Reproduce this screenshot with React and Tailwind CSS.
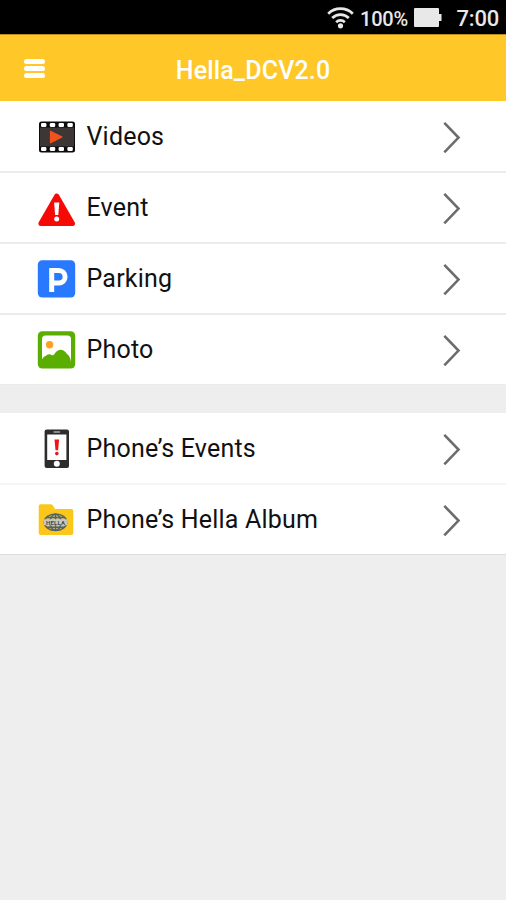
function FilmIcon() {
  return (
    <svg viewBox="0 0 40 40" className="size-10">
      <rect x="2" y="4.5" width="36" height="31" rx="2.5" fill="#0d0b0b" />
      <rect x="3" y="10.5" width="34" height="19" fill="#3c3636" />
      {[4, 12.8, 21.6, 30.4].map((x) => (
        <g key={x} fill="#fff">
          <rect x={x} y="6" width="5.4" height="4" rx="1.2" />
          <rect x={x} y="30" width="5.4" height="4" rx="1.2" />
        </g>
      ))}
      <path d="M13.5 14.2v11.6L25 20z" fill="#f4511e" stroke="#f4511e" strokeWidth="1.2" strokeLinejoin="round" />
    </svg>
  )
}

function WarningIcon() {
  return (
    <svg viewBox="0 0 40 40" className="size-10">
      <path d="M19.7 8L35.5 35.5H3.9z" fill="#f50a05" stroke="#f50a05" strokeWidth="5" strokeLinejoin="round" />
      <path d="M17.1 14.5h5.2l-1 12.5h-3.2z" fill="#fff" />
      <circle cx="19.7" cy="31" r="2.5" fill="#fff" />
    </svg>
  )
}

function ParkingIcon() {
  return (
    <svg viewBox="0 0 40 40" className="size-10">
      <rect x="0.8" y="1.2" width="37.4" height="37.4" rx="4.5" fill="#2979ff" />
      <path d="M14.7 33V11.5h7.1a6.1 6.1 0 0 1 0 12.6h-7" fill="none" stroke="#fff" strokeWidth="5" />
    </svg>
  )
}

function PhotoIcon() {
  return (
    <svg viewBox="0 0 40 40" className="size-10">
      <rect x="0.8" y="1.2" width="37.4" height="37.4" rx="4.5" fill="#5aae00" />
      <path
        d="M5 9a3.5 3.5 0 0 1 3.5-3.5h22A3.5 3.5 0 0 1 34 9v23c-.5-4-1.800-6.500-4-8-4-5.500-8.500-5.500-12.200-.5-.9 1.600-2 2.200-3.300 1.500-1.800-1.300-3.700-1-5.200.5C7.300 26.300 6 27.300 5 29.500z"
        fill="#fff"
      />
      <circle cx="12.6" cy="14.8" r="3.7" fill="#ffa01e" />
    </svg>
  )
}

function PhoneIcon() {
  return (
    <svg viewBox="0 0 40 40" className="size-10">
      <rect x="7.6" y="0.5" width="24.4" height="38.5" rx="2" fill="#2f2c2c" />
      <rect x="10.2" y="5.5" width="19.2" height="25.5" fill="#fff" />
      <rect x="16.3" y="2" width="7" height="2" rx="1" fill="#8a8888" />
      <circle cx="19.8" cy="34.8" r="3" fill="#fff" />
      <path d="M17.500 10.500h4.600l-1 10.700h-2.600z" fill="#f01313" />
      <circle cx="19.8" cy="24.6" r="1.8" fill="#f01313" />
    </svg>
  )
}

function FolderIcon() {
  return (
    <svg viewBox="0 0 40 40" className="size-10">
      <path
        d="M4 4.300h9.800q1.200 0 1.900 1l2.300 3.700h16.300a2 2 0 0 1 2 2v22a2 2 0 0 1-2 2H4a2.300 2.300 0 0 1-2.300-2.300V6.500A2.200 2.200 0 0 1 4 4.300z"
        fill="#fcc71b"
      />
      <ellipse cx="18.5" cy="22.3" rx="11.3" ry="8.3" fill="#d9c56b" stroke="#5f6255" strokeWidth="1.5" />
      <g fill="none" stroke="#4c6478" strokeWidth="1.5">
        <ellipse cx="18.5" cy="22.3" rx="5.5" ry="8" />
        <path d="M18.5 14.300v16M9.500 17.500h18M9.500 27.300h18" />
      </g>
      <rect x="6.5" y="19.3" width="24" height="6" rx="1" fill="#c9c8b8" />
      <text
        x="18.5"
        y="24.5"
        textAnchor="middle"
        textLength="19"
        className="font-['Roboto',sans-serif] text-[6px] font-bold"
        fill="#3d4a55"
      >
        HELLA
      </text>
    </svg>
  )
}

const GROUPS = [
  {
    divider: 'border-[#ebebeb] last:border-[#ebebeb]',
    rows: [
      { label: 'Videos', Icon: FilmIcon },
      { label: 'Event', Icon: WarningIcon },
      { label: 'Parking', Icon: ParkingIcon },
      { label: 'Photo', Icon: PhotoIcon },
    ],
  },
  {
    divider: 'border-[#f5f5f5] last:border-[#dedede]',
    rows: [
      { label: 'Phone’s Events', Icon: PhoneIcon },
      { label: 'Phone’s Hella Album', Icon: FolderIcon },
    ],
  },
]

function Row({ label, Icon, divider }) {
  return (
    <li
      className={`flex h-[71px] items-center border-b-2 pt-px pr-[45px] pl-[37px] last:h-[70px] last:border-b ${divider}`}
    >
      <Icon />
      <span className="ml-[9.5px] flex-1 text-[25px] leading-[30px] tracking-[0.2px] whitespace-nowrap text-[#111]">
        {label}
      </span>
      <svg viewBox="0 0 18 32" className="h-8 w-[18px]" fill="none" stroke="#6c6c6c" strokeWidth="2.6">
        <path d="M1.300 1.900L15.500 16.600 1.300 31.300" />
      </svg>
    </li>
  )
}

function StatusBar() {
  return (
    <div className="flex h-[34px] items-center bg-black pt-[3px] pl-[327px] text-[#e8e8e8]">
      <svg viewBox="0 0 27 24" className="-mt-[3px] h-6 w-[27px]" fill="none" stroke="currentColor" strokeWidth="2.7">
        <path d="M1.200 8.700a17.500 17.500 0 0 1 24.600 0" />
        <path d="M5.200 13a11.800 11.800 0 0 1 16.600 0" />
        <path d="M9.200 17.200a6.200 6.200 0 0 1 8.600 0" />
        <circle cx="13.5" cy="20.8" r="2.6" fill="currentColor" stroke="none" />
      </svg>
      <span className="ml-1.5 w-[54px] text-[20px] leading-6 font-medium tracking-[-0.2px]">100%</span>
      <svg viewBox="0 0 28 20" className="-mt-px h-5 w-7" fill="currentColor">
        <path d="M1 0h23a1 1 0 0 1 1 1v5h2.500v7H25v5a1 1 0 0 1-1 1H1a1 1 0 0 1-1-1V1a1 1 0 0 1 1-1z" />
      </svg>
      <span className="ml-[14.5px] text-[22px] leading-6 font-medium tracking-[-0.2px]">7:00</span>
    </div>
  )
}

export default function App() {
  return (
    <div className="h-[900px] w-[506px] overflow-hidden bg-[#eee] font-['Roboto',sans-serif]">
      <StatusBar />

      {/* Title bar */}
      <header className="flex h-[67px] items-center border-t border-[#b98e1c] bg-[#ffc727] pl-6 text-white">
        <button className="flex w-[21px] flex-col gap-[2px]" aria-label="Menu">
          <span className="h-[5px] w-full rounded-sm bg-white" />
          <span className="h-[5px] w-full rounded-sm bg-white" />
          <span className="h-[5px] w-full rounded-sm bg-white" />
        </button>
        <h1 className="flex-1 pt-[5px] pr-[45px] text-center text-[25px] leading-[30px] font-medium tracking-[0.15px]">
          Hella_DCV2.0
        </h1>
      </header>

      {/* Menu groups */}
      <div className="flex flex-col gap-7">
        {GROUPS.map(({ divider, rows }, i) => (
          <ul key={i} className="bg-white pt-px">
            {rows.map((row) => (
              <Row key={row.label} divider={divider} {...row} />
            ))}
          </ul>
        ))}
      </div>
    </div>
  )
}
